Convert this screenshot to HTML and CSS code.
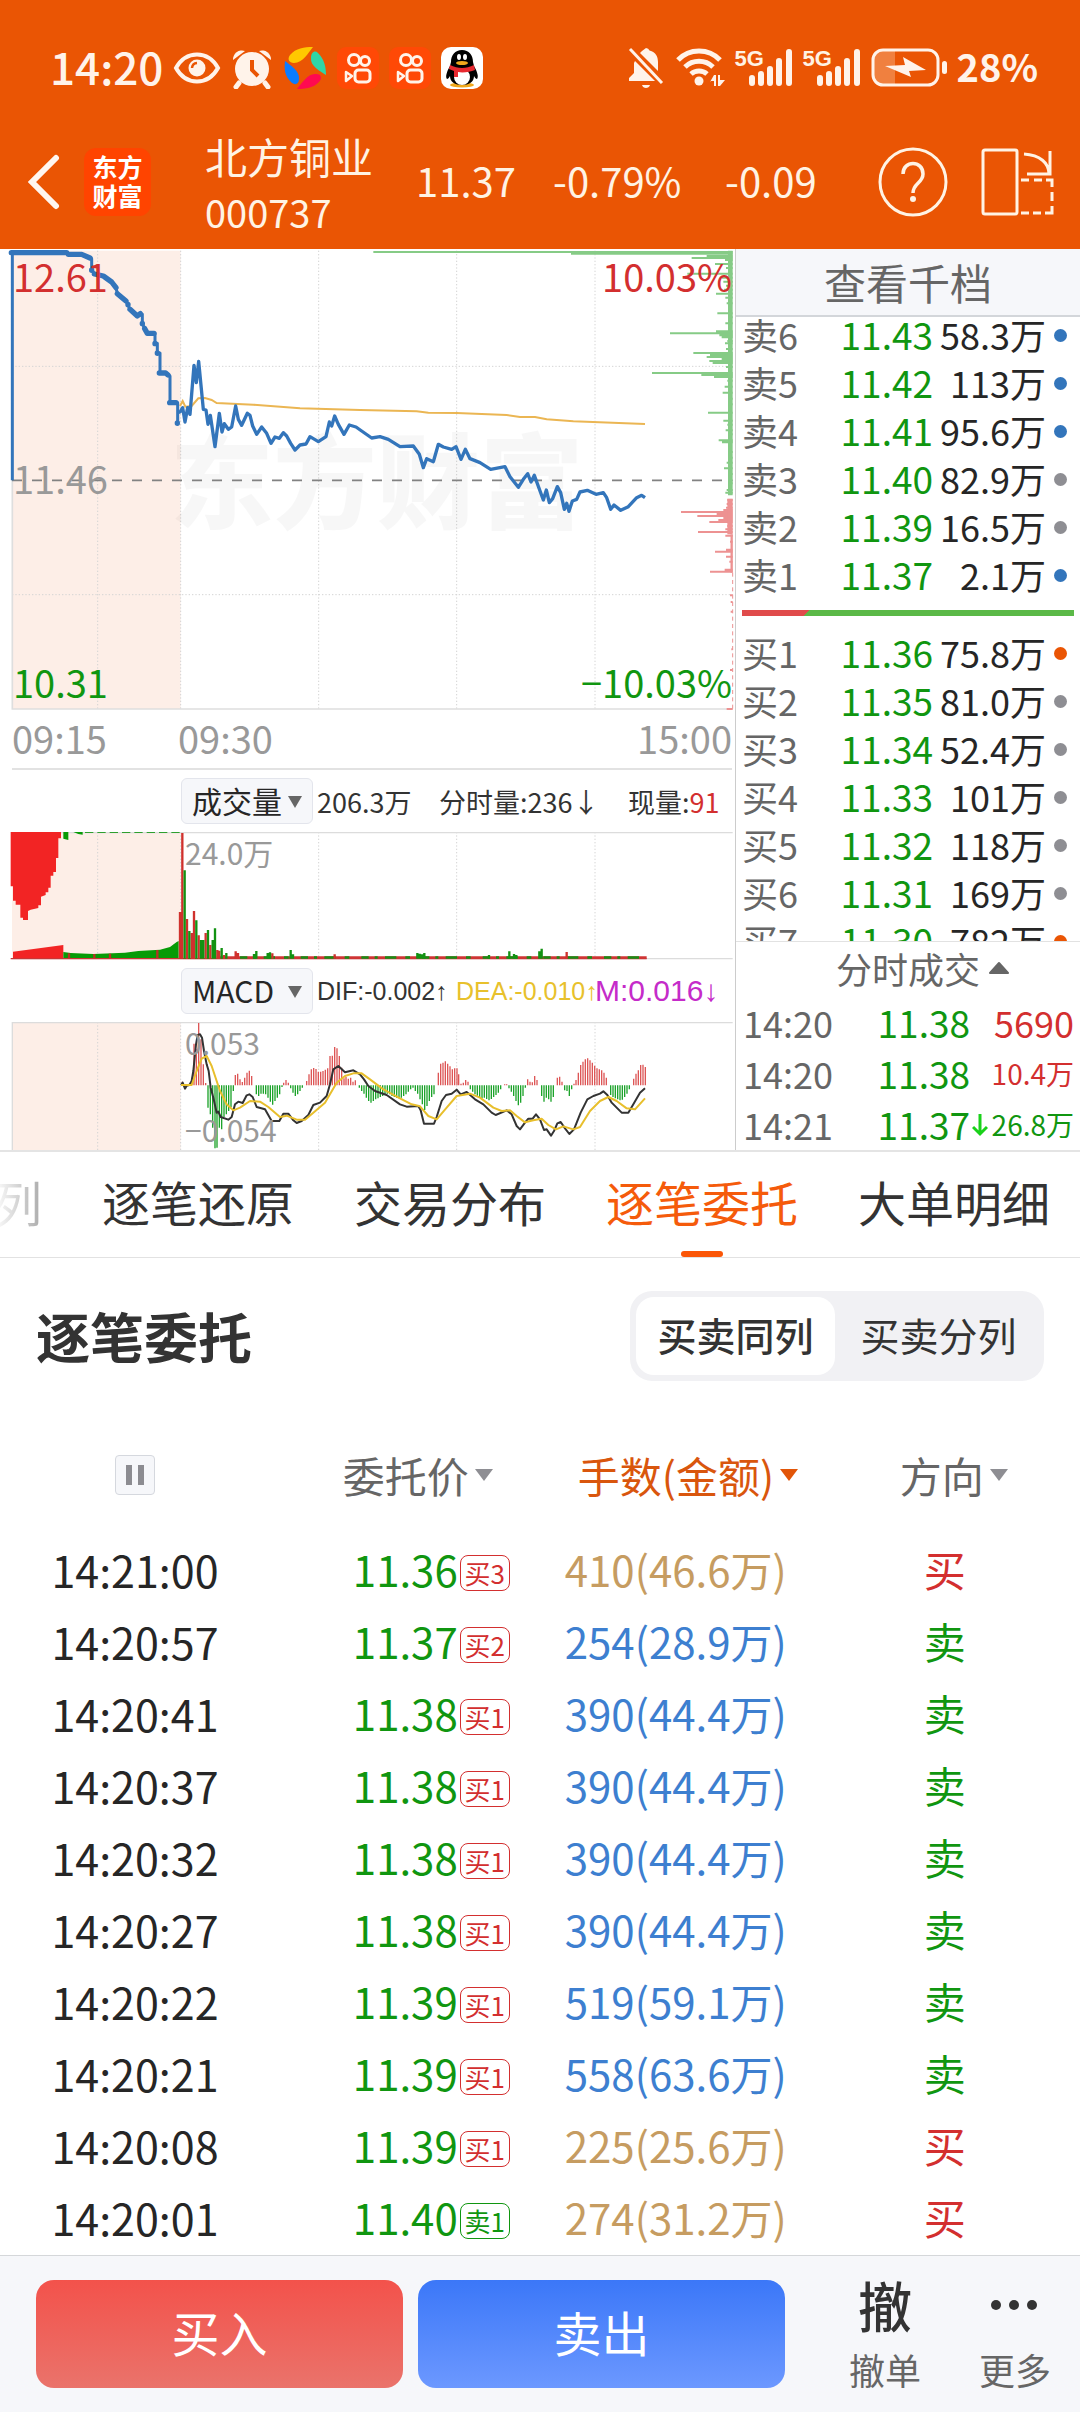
FILE: index.html
```html
<!DOCTYPE html>
<html lang="zh-CN">
<head>
<meta charset="utf-8">
<meta name="viewport" content="width=device-width, initial-scale=1">
<title>北方铜业 000737</title>
<link rel="stylesheet" href="styles.css">
</head>
<body>
<header class="top">
  <div class="status">
    <span class="status-text">14:20</span>
    <svg width="48" height="42" viewBox="0 0 48 42" fill="none" stroke="#fff3ea"><path d="M3 21C13 3 35 3 45 21C35 39 13 39 3 21Z" stroke-width="4"/><circle cx="24" cy="21" r="8.500" fill="#fff3ea" stroke="none"/><path d="M19 21a5.500 5.500 0 0 1 5-5" stroke="#ea5504" stroke-width="2.500"/></svg>
    <svg width="42" height="42" viewBox="0 0 42 42"><g fill="#fff3ea"><circle cx="21" cy="22" r="17"/><path d="M2 13a9 9 0 0 1 12-9z"/><path d="M40 13a9 9 0 0 0-12-9z"/></g><path d="M8 36l-3 4M34 36l3 4" stroke="#fff3ea" stroke-width="5" stroke-linecap="round"/><path d="M21 13v10l6 6" fill="none" stroke="#ea5504" stroke-width="4"/></svg>
    <svg width="44" height="44" viewBox="0 0 44 44"><path d="M7 9C13 2 21 1 30 1C25 7 20 17 11 17C6 17 4 13 7 9Z" fill="#ffc800"/><path d="M35 7C41 13 43 20 43 29C37 25 27 20 28 12C28 6 32 4 35 7Z" fill="#2fd6a7"/><path d="M36 36C30 42 23 43 14 43C19 37 25 27 33 28C39 28 39 33 36 36Z" fill="#ff0a50"/><path d="M8 36C2 30 1 24 2 15C7 19 17 25 16 33C16 38 12 40 8 36Z" fill="#0a7cff"/></svg>
    <svg width="42" height="42" viewBox="0 0 42 42"><rect width="42" height="42" rx="9" fill="#ff4906"/><g fill="none" stroke="#fff3ea" stroke-width="3"><circle cx="17" cy="13" r="5.500"/><circle cx="28" cy="14" r="4.500"/><rect x="18" y="23" width="15" height="12" rx="3.500"/><path d="M9 25l6 4-6 5z" stroke-width="2.500" stroke-linejoin="round"/></g></svg>
    <svg width="42" height="42" viewBox="0 0 42 42"><rect width="42" height="42" rx="9" fill="#ff4906"/><g fill="none" stroke="#fff3ea" stroke-width="3"><circle cx="17" cy="13" r="5.500"/><circle cx="28" cy="14" r="4.500"/><rect x="18" y="23" width="15" height="12" rx="3.500"/><path d="M9 25l6 4-6 5z" stroke-width="2.500" stroke-linejoin="round"/></g></svg>
    <svg width="42" height="42" viewBox="0 0 42 42"><rect width="42" height="42" rx="10" fill="#fff"/><ellipse cx="21" cy="38" rx="12" ry="2.500" fill="#f0a81c"/><path d="M21 3c7 0 11 5 11 12l1 4c3 5 5 11 3 13-1 0-2-1-3-3 0 6-5 9-12 9S9 35 9 29c-1 2-2 3-3 3-2-2 0-8 3-13l1-4C10 8 14 3 21 3Z" fill="#000"/><ellipse cx="21" cy="30" rx="8" ry="8" fill="#fff"/><path d="M9 18c8 4 16 4 24 0l1 5c-5 2-12 3-17 2v5h-4v-6l-5-2z" fill="#e8292f"/><ellipse cx="18" cy="10" rx="2" ry="3" fill="#fff"/><ellipse cx="24" cy="10" rx="2" ry="3" fill="#fff"/><ellipse cx="21" cy="16" rx="6" ry="2" fill="#f0a81c"/></svg>
    <span class="spacer"></span>
    <svg width="38" height="42" viewBox="0 0 38 42"><path d="M19 1a4 4 0 0 1 3.500 2.500C29 5 31 10 31 15v9L13 6l2-2zM8 14l20 20H2v-3l5-5V16zM15 38h8c-1 4-7 4-8 0z" fill="#fff3ea"/><path d="M3 2l32 34" stroke="#fff3ea" stroke-width="3"/></svg>
    <svg width="50" height="42" viewBox="0 0 50 42" fill="none" stroke="#fff3ea" stroke-width="5"><path d="M3 13a29 29 0 0 1 42 0"/><path d="M10 20a20 20 0 0 1 28 0"/><path d="M16 27a12 12 0 0 1 16 0"/><circle cx="24" cy="34" r="4.500" fill="#fff3ea" stroke="none"/><path d="M35 35l4-7h2v11h-2v-5h-4zM43 28h2v5h5l-5 6h-2z" fill="#fff3ea" stroke="none"/></svg>
    <span class="signal">5G<svg width="58" height="42" viewBox="0 0 58 42" stroke="#fff3ea" stroke-width="6" stroke-linecap="round"><path d="M17 31v5M26 27v9M35 22v14M44 14v22M54 5v31"/></svg></span>
    <span class="signal">5G<svg width="58" height="42" viewBox="0 0 58 42" stroke="#fff3ea" stroke-width="6" stroke-linecap="round"><path d="M17 31v5M26 27v9M35 22v14M44 14v22M54 5v31"/></svg></span>
    <svg width="76" height="42" viewBox="0 0 76 42"><path d="M11 4h13v34H11c-5 0-8-4-8-8V12c0-4 3-8 8-8z" fill="#f0803f"/><rect x="2" y="3" width="65" height="35" rx="10" fill="none" stroke="#fff3ea" stroke-width="3"/><rect x="71" y="14" width="5" height="13" rx="2.500" fill="#fff3ea"/><path d="M14 19l20-1-2-8 23 13-17 1 2 6z" fill="#fff3ea"/></svg>
    <span class="status-text pct">28%</span>
  </div>
  <div class="appbar">
    <a class="back" href="#" aria-label="返回"><svg width="34" height="60" viewBox="0 0 34 60"><path d="M30 6L6 30l24 24" fill="none" stroke="#fff6f0" stroke-width="6" stroke-linecap="round"/></svg></a>
    <span class="logo">东方<br>财富</span>
    <h1 class="stock">北方铜业<small>000737</small></h1>
    <span class="q-price">11.37</span>
    <span class="q-pct">-0.79%</span>
    <span class="q-chg">-0.09</span>
    <button class="icon-btn" aria-label="帮助"><svg width="70" height="70" viewBox="0 0 70 70" fill="none" stroke="#fff3e4" stroke-width="3"><circle cx="35" cy="35" r="33"/><path d="M25 27c0-14 20-14 20 0 0 9-10 9-10 19" stroke-width="3.500"/><circle cx="35" cy="52" r="3" fill="#fff3e4" stroke="none"/></svg></button>
    <button class="icon-btn" aria-label="横屏"><svg width="74" height="70" viewBox="0 0 74 70" fill="none" stroke="#fff3e4" stroke-width="3"><rect x="2" y="3" width="34" height="64" rx="2"/><path d="M43 7c16 1 25 9 25 20M69 4v23H46"/><path d="M40 33h8M53 33h8M65 33h6v7M71 45v9M71 59v7h-7M60 66h-8M48 66h-8"/></svg></button>
  </div>
</header>

<main>
<section class="market">
  <div class="charts">
    <div class="plot">
      <svg viewBox="0 9 2205 1383">
        <rect x="36" y="14" width="506" height="1375" fill="#fdeee7"/>
        <g stroke="#d4d4d4" stroke-width="3" stroke-dasharray="4 6"><path d="M293 14V1389M542 14V1389M956 14V1389M1370 14V1389M1785 14V1389M36 361H2198M36 1046H2198"/></g>
        <text x="510" y="826" class="watermark">东方财富</text>
        <path d="M37 14V1389H2198" fill="none" stroke="#dedede" stroke-width="5"/>
        <path d="M36 703H2198" stroke="#828282" stroke-width="5" stroke-dasharray="30 30"/>
        <g fill="none" stroke="#86cb86" stroke-width="6"><path d="M1120 18H2198M1713 23H2198M2120 30H2198M2075 36H2198M2175 42H2198M2145 54H2198M2178 66H2198M2062 83H2198M2165 95H2198M2170 107H2198M2178 119H2198M2172 131H2198M2148 143H2198M2176 155H2198M2180 172H2198M2152 202H2198M2186 214H2198M2176 232H2198M2148 256H2198M2010 262H2198M2158 268H2198M2165 274H2198M2182 285H2198M2175 292H2198M2178 309H2198M2080 321H2198M2130 327H2198M2120 333H2198M2165 339H2198M2128 345H2198M2138 351H2198M2178 363H2198M1956 381H2198M2104 387H2198M2142 393H2198M2182 404H2198M2174 422H2198M2168 440H2198M2184 458H2198M2186 475H2198M2124 500H2198M2170 524H2198M2182 536H2198M2177 553H2198M2184 565H2198M2156 583H2198M2166 589H2198M2186 618H2198M2188 635H2198M2180 650H2198M2172 667H2198M2184 684H2198M2188 712H2198M2180 732H2198M2176 740H2198"/><path d="M2191 14V748" stroke-width="14"/></g>
        <g fill="none" stroke="#ed9292" stroke-width="6"><path d="M2182 762H2198M2180 774H2198M2178 785H2198M2170 792H2198M2043 798H2198M2150 804H2198M2092 810H2198M2170 816H2198M2155 822H2198M2128 828H2198M2182 840H2198M2176 850H2198M2094 858H2198M2176 869H2198M2190 887H2198M2178 911H2198M2145 917H2198M2178 932H2198M2188 947H2198M2174 971H2198M2130 977H2198M2190 1048H2198M2192 1068H2198M2192 1097H2198M2194 1210H2198M2190 1272H2198M2180 1389H2198"/><path d="M2190 758V865" stroke-width="16"/><path d="M2195 865V980" stroke-width="7"/><path d="M2198 980V1389" stroke-width="3" stroke-dasharray="12 10"/></g>
        <polyline fill="none" stroke="#ebb653" stroke-width="6" points="540,480 548,465 556,482 575,480 595,457 615,456 635,462 650,471 760,476 900,487 1080,492 1250,496 1285,500 1370,501 1520,507 1560,513 1605,513 1640,520 1720,526 1935,534"/>
        <g fill="none" stroke="#3375bb" stroke-linejoin="round">
          <path stroke-width="9" d="M37 703V20H200L205 25H245L270 36 275 38V72L285 84 310 90 335 108 348 125 352 143 378 165 390 190 412 210 427 205V232L440 262H465V292H472V321H480V381H500L510 390V470H533V531"/>
          <path stroke-width="16" stroke-linecap="round" d="M34 20H200M205 25H245L270 36M275 72v1M283 84L310 90 335 108 348 125M352 143L378 165M384 175v1M390 190L412 210 421 203M427 232v1M434 248L442 262H462M465 292v1M472 321v1M478 381H497L504 387M509 470H528M532 531v1"/>
          <path stroke-width="10" d="M533 500L540 498 548 485 555 528 563 485 570 505 582 358 589 410 596 346 610 490 618 492 624 535 631 508 645 602 658 502 666 558 673 533 685 550 695 543 707 480 715 520 725 538 742 502 750 508 758 540 770 565 785 543 800 562 813 592 825 573 838 577 850 560 860 570 872 592 885 612 900 597 918 594 930 572 955 587 978 572 988 528 995 540 1004 510 1015 535 1032 565 1048 537 1068 543 1085 555 1115 576 1140 572 1165 580 1200 602 1240 600 1258 625 1270 665 1280 638 1300 647 1315 595 1330 603 1355 610 1368 602 1383 640 1396 610 1410 638 1440 650 1472 670 1515 662 1530 692 1555 724 1570 700 1583 683 1593 708 1603 688 1630 762 1639 732 1648 770 1658 758 1672 722 1682 740 1693 790 1700 772 1707 796 1717 765 1730 760 1740 738 1762 733 1788 745 1810 740 1820 755 1832 790 1842 777 1862 793 1885 782 1910 755 1925 748 1935 755"/>
        </g>
      </svg>
      <span class="mark hi">12.61</span><span class="mark hi right">10.03%</span>
      <span class="mark mid">11.46</span>
      <span class="mark lo">10.31</span><span class="mark lo right">−10.03%</span>
    </div>
    <div class="axis"><span>09:15</span><span>09:30</span><span>15:00</span></div>
    <div class="indicator">
      <label class="pick"><select aria-label="指标一"><option>成交量</option></select><svg width="14" height="12" viewBox="0 0 14 12"><path d="M0 0h14L7 12z" fill="#666"/></svg></label>
      <span class="v1">206.3万</span><span class="v2">分时量:236↓</span><span class="v3">现量:<b>91</b></span>
    </div>
    <div class="plot">
      <svg viewBox="0 213 2205 384">
        <rect x="36" y="213" width="506" height="380" fill="#fdeee7"/>
        <g stroke="#d4d4d4" stroke-width="3" stroke-dasharray="4 6"><path d="M293 213V593M542 213V593M956 213V593M1370 213V593M1785 213V593"/></g>
        <path d="M36 214.500H2198M36 593H2198" stroke="#dcdcdc" stroke-width="4"/>
        <path fill="#f22424" d="M32 213V376H39V419H47V431H61V470H69V477H84V450L92 446 115 441V433H123V407L137 402V394H145V380H152V344H160V333H168V291H175V232H183V213ZM39 593V572L190 552V593Z"/>
        <path fill="#069b06" d="M190 213V233L205 237V213ZM220 213L235 219 248 221V213ZM190 593V573L212 576 280 579 375 575 415 570 480 566 510 558 530 543 536 540V593Z"/>
        <path d="M255 214H540" stroke="#2f9f2f" stroke-width="4" stroke-dasharray="25 12"/>
        <path d="M207 593V577M283 593V579M330 593V578M472 593V567" stroke="#b53423" stroke-width="7"/>
        <path d="M32 593H1940" stroke="#c93636" stroke-width="4"/>
        <path d="M650 589.500H1940" stroke="#cf3535" stroke-width="8"/>
        <path d="M720 589.500H1940" stroke="#158f15" stroke-width="8" stroke-dasharray="22 18 9 22 34 27 14 36"/>
        <path d="M540 593V453M547 593V216M561 593V474M575 593V516M582 593V450M596 593V523M617 593V516M631 593V552M652 593V567M658 593V569M672 593V582M707 593V571M714 593V576M817 593V577M1004 593V580M1700 593V573" stroke="#d0312d" stroke-width="7"/>
        <path d="M554 593V328M568 593V510M589 593V478M603 593V537M610 593V537M624 593V507M638 593V537M645 593V502M665 593V561M679 593V576M762 593V579M769 593V570M803 593V576M810 593V574M872 593V567M879 593V580M1252 593V576M1259 593V578M1266 593V580M1273 593V576M1467 593V582M1528 593V571M1542 593V579M1549 593V582M1618 593V571M1625 593V563" stroke="#129212" stroke-width="7"/>
      </svg>
      <span class="mark small upper">24.0万</span>
    </div>
    <div class="indicator">
      <label class="pick"><select aria-label="指标二"><option>MACD</option></select><svg width="14" height="12" viewBox="0 0 14 12"><path d="M0 0h14L7 12z" fill="#666"/></svg></label>
      <span class="m1">DIF:-0.002↑</span><span class="m2">DEA:-0.010↑</span><span class="m3">M:0.016↓</span>
    </div>
    <div class="plot">
      <svg viewBox="0 783 2205 384">
        <rect x="36" y="783" width="506" height="384" fill="#fdeee7"/>
        <g stroke="#d4d4d4" stroke-width="3" stroke-dasharray="4 6"><path d="M293 783V1167M542 783V1167M956 783V1167M1370 783V1167M1785 783V1167"/></g>
        <path d="M2198 784.500H37V1167" fill="none" stroke="#dcdcdc" stroke-width="4"/>
        <path stroke="#dd5656" stroke-width="4" d="M547 973V962M575 973V950M582 973V848M589 973V865M596 973V786M603 973V835M610 973V910M617 973V966M706 973V942M713 973V938M720 973V955M727 973V963M734 973V950M741 973V935M748 973V929M755 973V945M851 973V965M858 973V957M865 973V965M920 973V960M927 973V940M934 973V925M941 973V921M948 973V924M955 973V932M962 973V932M969 973V930M976 973V926M983 973V922M990 973V885M997 973V884M1004 973V858M1011 973V862M1018 973V885M1025 973V920M1032 973V952M1038 973V948M1045 973V953M1052 973V950M1059 973V962M1066 973V958M1315 973V935M1322 973V908M1329 973V905M1336 973V901M1343 973V908M1350 973V916M1357 973V925M1364 973V922M1371 973V922M1376 973V940M1383 973V968M1390 973V965M1397 973V957M1404 973V962M1514 973V970M1520 973V970M1583 973V955M1590 973V962M1597 973V964M1604 973V945M1611 973V957M1672 973V950M1679 973V947M1686 973V962M1722 973V968M1728 973V957M1735 973V935M1742 973V912M1749 973V902M1756 973V895M1763 973V892M1770 973V898M1777 973V905M1784 973V914M1791 973V922M1798 973V925M1805 973V928M1812 973V935M1819 973V950M1901 973V953M1908 973V938M1915 973V928M1922 973V912M1929 973V911M1936 973V918"/>
        <path stroke="#1da32b" stroke-width="4" d="M624 973V1040M631 973V1060M638 973V1100M645 973V1162M651 973V1160M658 973V1100M665 973V1105M672 973V1068M679 973V1060M686 973V1050M693 973V1038M700 973V990M769 973V1000M776 973V1005M783 973V998M790 973V998M797 973V1000M804 973V1010M811 973V1022M818 973V1031M825 973V1020M832 973V1010M839 973V1000M846 973V978M872 973V982M879 973V995M886 973V1005M893 973V1000M900 973V990M907 973V980M1078 973V980M1085 973V990M1092 973V998M1099 973V1010M1106 973V1020M1113 973V1025M1120 973V1020M1127 973V1015M1134 973V1012M1141 973V1008M1148 973V1005M1155 973V1000M1162 973V998M1169 973V1000M1176 973V1005M1183 973V1008M1190 973V1010M1197 973V1012M1204 973V1010M1211 973V1005M1218 973V1000M1225 973V992M1232 973V985M1239 973V980M1246 973V990M1253 973V998M1260 973V1015M1267 973V1030M1274 973V1047M1281 973V1035M1288 973V1020M1295 973V1008M1302 973V1000M1411 973V985M1418 973V992M1425 973V1000M1432 973V1004M1439 973V1008M1446 973V1012M1453 973V1010M1460 973V1014M1467 973V1018M1474 973V1014M1481 973V1008M1488 973V1002M1495 973V995M1502 973V985M1527 973V982M1534 973V992M1541 973V1005M1548 973V1020M1555 973V1033M1562 973V1025M1569 973V1005M1576 973V980M1625 973V1005M1632 973V1022M1639 973V1010M1646 973V1015M1653 973V1022M1660 973V1008M1694 973V988M1701 973V990M1708 973V1005M1715 973V985M1832 973V1002M1839 973V1008M1846 973V1012M1853 973V1015M1860 973V1018M1867 973V1016M1874 973V1008M1881 973V998M1888 973V985"/>
        <polyline fill="none" stroke="#333" stroke-width="6" stroke-linejoin="round" points="543,972 548,965 555,983 560,974 568,972 575,960 580,930 588,850 593,822 600,820 606,830 612,870 620,910 626,930 632,980 640,1010 650,1055 655,1052 662,1068 685,1076 695,1068 705,1030 715,1022 728,1026 740,1003 748,1000 758,1008 770,1038 795,1045 815,1080 838,1080 850,1058 865,1058 880,1078 890,1086 905,1080 925,1062 940,1032 960,1025 980,1005 990,970 1000,925 1015,915 1035,934 1060,928 1080,940 1092,955 1105,975 1125,990 1160,1002 1200,1030 1220,1037 1255,1035 1262,1048 1272,1088 1302,1088 1310,1068 1325,1020 1338,1002 1355,998 1370,986 1382,1000 1400,993 1425,1015 1450,1030 1475,1055 1487,1062 1520,1048 1535,1060 1550,1095 1560,1105 1575,1085 1585,1073 1598,1073 1608,1060 1620,1075 1632,1107 1640,1105 1653,1124 1662,1110 1672,1087 1682,1083 1695,1102 1708,1119 1722,1105 1742,1055 1762,1015 1780,1005 1800,998 1810,991 1822,1002 1835,1025 1865,1055 1885,1055 1900,1030 1920,995 1935,982"/>
        <polyline fill="none" stroke="#e8bf2c" stroke-width="6" stroke-linejoin="round" points="543,972 575,972 590,930 605,893 620,885 635,915 660,990 680,1030 700,1048 720,1040 750,1020 780,1022 805,1038 840,1068 860,1064 890,1076 915,1076 940,1055 975,1025 1010,965 1035,945 1060,937 1085,937 1110,955 1150,985 1200,1012 1235,1030 1260,1036 1285,1065 1310,1075 1340,1040 1370,1005 1410,998 1440,1010 1480,1040 1505,1050 1530,1048 1550,1065 1575,1084 1600,1078 1625,1073 1645,1092 1668,1105 1690,1096 1720,1105 1740,1098 1770,1050 1800,1020 1825,1008 1850,1020 1880,1042 1905,1045 1935,1012"/>
      </svg>
      <span class="mark small upper">0.053</span><span class="mark small lower">−0.054</span>
    </div>
  </div>

  <aside class="side">
    <button class="depth">查看千档</button>
    <div class="book">
      <table class="levels">
        <colgroup><col class="l1"><col class="l2"><col class="l3"><col class="l4"></colgroup>
        <tr><th>卖6</th><td>11.43</td><td>58.3万</td><td><i class="dot blue"></i></td></tr>
        <tr><th>卖5</th><td>11.42</td><td>113万</td><td><i class="dot blue"></i></td></tr>
        <tr><th>卖4</th><td>11.41</td><td>95.6万</td><td><i class="dot blue"></i></td></tr>
        <tr><th>卖3</th><td>11.40</td><td>82.9万</td><td><i class="dot"></i></td></tr>
        <tr><th>卖2</th><td>11.39</td><td>16.5万</td><td><i class="dot"></i></td></tr>
        <tr><th>卖1</th><td>11.37</td><td>2.1万</td><td><i class="dot blue"></i></td></tr>
      </table>
      <div class="ratio"></div>
      <table class="levels">
        <colgroup><col class="l1"><col class="l2"><col class="l3"><col class="l4"></colgroup>
        <tr><th>买1</th><td>11.36</td><td>75.8万</td><td><i class="dot orange"></i></td></tr>
        <tr><th>买2</th><td>11.35</td><td>81.0万</td><td><i class="dot"></i></td></tr>
        <tr><th>买3</th><td>11.34</td><td>52.4万</td><td><i class="dot"></i></td></tr>
        <tr><th>买4</th><td>11.33</td><td>101万</td><td><i class="dot"></i></td></tr>
        <tr><th>买5</th><td>11.32</td><td>118万</td><td><i class="dot"></i></td></tr>
        <tr><th>买6</th><td>11.31</td><td>169万</td><td><i class="dot"></i></td></tr>
        <tr><th>买7</th><td>11.30</td><td>782万</td><td><i class="dot orange"></i></td></tr>
      </table>
    </div>
    <button class="ticks-head">分时成交<svg width="22" height="14" viewBox="0 0 22 14"><path d="M2 12L11 2l9 10z" fill="#666" stroke="#666" stroke-width="2" stroke-linejoin="round"/></svg></button>
    <table class="ticks">
      <colgroup><col class="t1"><col class="t2"><col class="t3"><col class="t4"></colgroup>
      <tr><td>14:20</td><td class="green">11.38</td><td></td><td class="red">5690</td></tr>
      <tr><td>14:20</td><td class="green">11.38</td><td></td><td class="red sm">10.4万</td></tr>
      <tr><td>14:21</td><td class="green">11.37</td><td class="arrow"><svg width="16" height="24" viewBox="0 0 16 24"><path d="M8 1v20M1 14l7 7 7-7" fill="none" stroke="#1ad11a" stroke-width="3"/></svg></td><td class="green sm">26.8万</td></tr>
    </table>
  </aside>
</section>

<nav class="tabs">
  <a href="#">列</a><a href="#">逐笔还原</a><a href="#">交易分布</a><a href="#" class="on" aria-current="page">逐笔委托</a><a href="#">大单明细</a>
</nav>

<section class="orders">
  <div class="orders-head">
    <h2>逐笔委托</h2>
    <div class="segment"><button class="on" aria-pressed="true">买卖同列</button><button aria-pressed="false">买卖分列</button></div>
  </div>
  <table class="list">
    <colgroup><col class="c1"><col class="c2"><col class="c3"><col class="c4"></colgroup>
    <thead><tr>
      <th><button class="pause" aria-label="暂停"><svg width="20" height="20" viewBox="0 0 20 20"><path d="M4 0v20M16 0v20" stroke="#8c8c91" stroke-width="6"/></svg></button></th>
      <th><button class="sort">委托价<i></i></button></th>
      <th><button class="sort on">手数(金额)<i></i></button></th>
      <th><button class="sort">方向<i></i></button></th>
    </tr></thead>
    <tbody>
      <tr><td>14:21:00</td><td>11.36<em>买3</em></td><td class="gold">410(46.6万)</td><td class="red">买</td></tr>
      <tr><td>14:20:57</td><td>11.37<em>买2</em></td><td>254(28.9万)</td><td class="green">卖</td></tr>
      <tr><td>14:20:41</td><td>11.38<em>买1</em></td><td>390(44.4万)</td><td class="green">卖</td></tr>
      <tr><td>14:20:37</td><td>11.38<em>买1</em></td><td>390(44.4万)</td><td class="green">卖</td></tr>
      <tr><td>14:20:32</td><td>11.38<em>买1</em></td><td>390(44.4万)</td><td class="green">卖</td></tr>
      <tr><td>14:20:27</td><td>11.38<em>买1</em></td><td>390(44.4万)</td><td class="green">卖</td></tr>
      <tr><td>14:20:22</td><td>11.39<em>买1</em></td><td>519(59.1万)</td><td class="green">卖</td></tr>
      <tr><td>14:20:21</td><td>11.39<em>买1</em></td><td>558(63.6万)</td><td class="green">卖</td></tr>
      <tr><td>14:20:08</td><td>11.39<em>买1</em></td><td class="gold">225(25.6万)</td><td class="red">买</td></tr>
      <tr><td>14:20:01</td><td>11.40<em class="sell">卖1</em></td><td class="gold">274(31.2万)</td><td class="red">买</td></tr>
    </tbody>
  </table>
</section>
</main>

<footer class="actions">
  <button class="trade buy">买入</button>
  <button class="trade sell">卖出</button>
  <div class="more">
    <a href="#"><span class="glyph">撤</span>撤单</a>
    <a href="#"><span class="glyph"><svg width="48" height="10" viewBox="0 0 48 10" fill="#333"><circle cx="5" cy="5" r="5"/><circle cx="23" cy="5" r="5"/><circle cx="41" cy="5" r="5"/></svg></span>更多</a>
  </div>
</footer>
</body>
</html>
```
FILE: styles.css
```css
* { box-sizing: border-box; }
body {
  margin: 0;
  background: #fff;
  color: #262626;
  font-family: "Noto Sans CJK SC", sans-serif;
}
button, select {
  margin: 0;
  padding: 0;
  border: 0;
  background: none;
  color: inherit;
  font: inherit;
}
a { color: inherit; text-decoration: none; }
svg { display: block; flex: none; }
table { border-collapse: collapse; table-layout: fixed; }
td, th { padding: 0; font-weight: 400; white-space: nowrap; }
.red { color: #d32f2f; }
.green { color: #109610; }

/* header */
.top { background: #ea5504; color: #fff3e4; padding-bottom: 9px; }
.status {
  display: flex;
  align-items: center;
  gap: 10px;
  height: 124px;
  padding: 12px 42px 0 50px;
}
.status-text { padding-bottom: 4px; font-size: 44px; line-height: 44px; font-weight: 500; color: #fff3ea; }
.status-text.pct { font-size: 38px; font-weight: 700; }
.spacer { flex: 1; }
.signal { position: relative; font: 700 22px/24px "Liberation Sans", sans-serif; width: 58px; height: 42px; }
.signal svg { position: absolute; top: 0; left: 0; }
.appbar {
  display: grid;
  grid-template-columns: 58px 121px 211px 137px 172px 153px 103px 1fr;
  align-items: center;
  height: 116px;
  padding-left: 26px;
  font-size: 40px;
  line-height: 56px;
}
.logo {
  width: 67px;
  height: 68px;
  padding-top: 4px;
  border-radius: 12px;
  background: #ff4400;
  color: #fff;
  font-size: 25px;
  line-height: 29px;
  font-weight: 700;
  text-align: center;
}
.stock { margin: 0; padding-top: 3px; font-size: 42px; font-weight: 400; }
.stock small { display: block; font-size: 38px; }
.q-price, .q-pct, .q-chg { padding-bottom: 4px; }

/* charts and order book */
.market {
  display: grid;
  grid-template-columns: minmax(0, 735fr) minmax(0, 345fr);
  border-bottom: 2px solid #e4e4e4;
}
.plot { position: relative; }
.plot svg { width: 100%; height: auto; }
.watermark { font-size: 310px; font-weight: 900; fill: #000; fill-opacity: .03; }
.mark { position: absolute; left: 13px; font-size: 38px; line-height: 38px; }
.mark.right { left: auto; right: 3px; }
.mark.hi { top: 8px; color: #d32f2f; }
.mark.mid { top: 210px; color: #999; }
.mark.lo { bottom: 9px; color: #109610; }
.mark.small { left: 185px; font-size: 30px; line-height: 30px; color: #999; }
.mark.upper { top: 5px; }
.mark.lower { bottom: 6px; }
.axis {
  display: grid;
  grid-template-columns: 166px 1fr auto;
  height: 60px;
  margin: 0 3px 0 12px;
  border-bottom: 2px solid #e2e2e2;
  color: #999;
  font-size: 38px;
  line-height: 56px;
}
.indicator {
  display: flex;
  align-items: center;
  height: 62px;
  padding-left: 181px;
  font-size: 27px;
  white-space: nowrap;
  color: #333;
}
.pick {
  position: relative;
  width: 132px;
  height: 46px;
  margin-right: 4px;
  border: 1px solid #e3e5ec;
  border-radius: 6px;
  background: #f6f7fa;
  color: #262626;
}
.pick select { display: block; width: 100%; height: 42px; padding-left: 10px; font-size: 30px; line-height: 42px; appearance: none; }
.pick svg { position: absolute; top: 17px; right: 10px; pointer-events: none; }
.v1 { width: 122px; }
.v2 { width: 189px; }
.v3 b { font-weight: 400; color: #d32f2f; }
.m1, .m2, .m3 { font-family: "Liberation Sans", sans-serif; font-size: 25px; }
.m1, .m2 { width: 139px; }
.m2 { color: #e8c12c; }
.m3 { color: #c52bc9; font-size: 30px; }

.side { border-left: 1px solid #ccc; }
.depth {
  display: block;
  width: 100%;
  height: 68px;
  border-bottom: 2px solid #d3d6da;
  background: #f6f7fa;
  color: #666;
  font-size: 42px;
  line-height: 66px;
}
.book { max-height: 624px; overflow: hidden; font-size: 36px; line-height: 34px; }
.book .levels:first-child { margin-top: -7px; }
.levels { width: 100%; }
.levels tr { height: 48px; }
.levels th { padding-left: 6px; text-align: left; color: #666; }
.levels td { text-align: right; }
.levels td:nth-child(2) { color: #109610; font-size: 37px; }
.levels td:last-child { padding-right: 13px; }
.l1 { width: 64px; }
.l2 { width: 133px; }
.l3 { width: 113px; }
.dot { display: inline-block; width: 13px; height: 13px; border-radius: 50%; background: #8e8e93; vertical-align: 8px; }
.dot.blue { background: #3375bb; }
.dot.orange { background: #ea5504; }
.ratio {
  height: 6px;
  margin: 12px 6px;
  background: linear-gradient(135deg, #e04b4b 20%, #5bb947 20%);
}
.ticks-head {
  display: flex;
  align-items: center;
  justify-content: center;
  gap: 8px;
  width: 100%;
  height: 56px;
  padding: 0 0 4px 30px;
  border-top: 1px solid #e2e2e2;
  color: #666;
  font-size: 36px;
  line-height: 52px;
}
.ticks { width: 100%; font-size: 36px; line-height: 50px; }
.ticks tr { height: 51px; vertical-align: top; }
.ticks td { text-align: right; }
.ticks td:first-child { padding-left: 7px; text-align: left; color: #666; }
.ticks td:last-child { padding-right: 6px; }
.ticks .green:nth-child(2) { font-size: 37px; }
.ticks .sm { font-size: 28px; }
.ticks .arrow svg { margin: 14px 0 0 2px; }
.t1 { width: 104px; }
.t2 { width: 130px; }
.t3 { width: 20px; }

/* tabs */
.tabs {
  display: flex;
  gap: 60px;
  height: 106px;
  border-bottom: 1px solid #e2e2e2;
  overflow: hidden;
  color: #333;
  font-size: 48px;
  line-height: 99px;
  white-space: nowrap;
}
.tabs a { position: relative; flex: none; }
.tabs a:first-child {
  margin-left: -6px;
  color: transparent;
  background: linear-gradient(to right, #fff, #aaa);
  background-clip: text;
}
.tabs .on { color: #f55b0b; }
.tabs .on::after {
  content: "";
  position: absolute;
  left: calc(50% - 21px);
  bottom: 0;
  width: 42px;
  height: 6px;
  border-radius: 3px;
  background: #fb5607;
}

/* order list */
.orders-head {
  display: flex;
  justify-content: space-between;
  align-items: center;
  padding: 33px 36px 38px;
}
.orders-head h2 { margin: 0; color: #333; font-size: 54px; line-height: 84px; font-weight: 700; }
.segment {
  display: flex;
  padding: 6px;
  border-radius: 22px;
  background: #f1f1f4;
  color: #333;
  font-size: 39px;
  line-height: 74px;
}
.segment button { width: 199px; height: 78px; padding-bottom: 4px; border-radius: 18px; }
.segment button + button { width: 203px; padding-left: 4px; }
.segment .on { background: #fff; font-weight: 500; }
.list { width: 100%; font-size: 42px; line-height: 68px; }
.list thead tr { height: 116px; }
.list tbody tr { height: 72px; }
.list tr > * { padding-bottom: 4px; }
.list tr > :nth-child(1) { text-align: center; }
.list tr > :nth-child(2) { text-align: right; }
.list tr > :nth-child(3) { padding-left: 55px; text-align: left; }
.list tr > :nth-child(4) { padding-right: 50px; text-align: center; }
.list td:nth-child(1) { font-size: 43px; }
.list td:nth-child(2) { color: #109610; }
.list td:nth-child(3) { color: #3d7fd0; }
.list td.gold { color: #c69c61; }
.list td.red { color: #d32f2f; }
.list thead th:nth-child(2) { padding-right: 17px; }
.list thead th:nth-child(3) { padding-left: 68px; }
.list thead th:nth-child(4) { padding-right: 32px; }
.c1 { width: 25%; }
.c2 { width: 22.2%; }
.c3 { width: 32.4%; }
.pause {
  display: flex;
  align-items: center;
  justify-content: center;
  width: 40px;
  height: 40px;
  margin: 0 auto;
  border: 1px solid #d5d8de;
  border-radius: 4px;
  background: #f6f7fa;
}
.sort { display: inline-flex; align-items: center; gap: 6px; color: #666; }
.sort i { border: solid transparent; border-width: 12px 9px 0; border-top-color: #8e8e93; }
.sort.on { color: #d9560d; }
.sort.on i { border-top-color: #e25508; }
.list em {
  display: inline-block;
  width: 50px;
  height: 36px;
  margin-left: 2px;
  border: 1px solid #d32f2f;
  border-radius: 8px;
  color: #d32f2f;
  font-size: 26px;
  line-height: 33px;
  font-style: normal;
  text-align: center;
  vertical-align: 3px;
}
.list em.sell { border-color: #109610; color: #109610; }

/* bottom actions */
.actions {
  display: flex;
  gap: 15px;
  padding: 24px 0 24px 36px;
  border-top: 1px solid #d5d7da;
  background: #f6f7fa;
}
.trade { flex: 1; height: 108px; padding-bottom: 6px; border-radius: 18px; color: #fff; font-size: 48px; }
.trade.buy { background: linear-gradient(#f3524b, #ea736b); }
.trade.sell { background: linear-gradient(#3b77f8, #6c98ff); }
.more { display: grid; grid-template-columns: 1fr 1fr; width: 260px; margin-left: 20px; }
.more a { display: flex; flex-direction: column; align-items: center; gap: 14px; color: #666; font-size: 36px; line-height: 50px; }
.glyph { display: flex; align-items: center; height: 50px; color: #333; font-size: 54px; font-weight: 500; }
```
